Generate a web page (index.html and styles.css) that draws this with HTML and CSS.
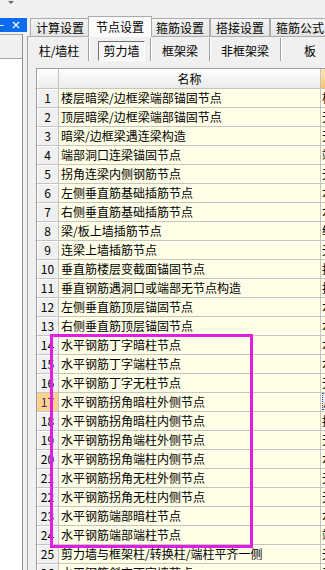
FILE: index.html
```html
<!DOCTYPE html>
<html lang="zh-CN">
<head>
  <meta charset="UTF-8">
  <title>节点设置</title>
  <link rel="stylesheet" href="styles.css">
</head>
<body>
  <div class="topbar"><span class="drop"></span></div>

  <div class="main">
    <aside class="side">
      <div class="side-title">
        <svg class="pin" width="4" height="7" viewBox="0 0 4 7"><path d="M0 3.5H3.5" stroke="#fff" stroke-width="1"/></svg>
        <svg class="close" width="8" height="8" viewBox="0 0 8 8"><path d="M1 1L7 7M7 1L1 7" stroke="#fff" stroke-width="1.2"/></svg>
      </div>
      <div class="side-body">
        <div class="side-head"></div>
        <div class="side-list"></div>
      </div>
    </aside>

    <section class="dialog">
      <div class="tabs">
        <div class="tab">计算设置</div>
        <div class="tab active">节点设置</div>
        <div class="tab">箍筋设置</div>
        <div class="tab">搭接设置</div>
        <div class="tab">箍筋公式</div>
      </div>

      <div class="page">
        <div class="subtabs">
          <div class="sub s1">柱/墙柱</div>
          <div class="sub s2"><span class="pressed">剪力墙</span></div>
          <div class="sub s3">框架梁</div>
          <div class="sub s4">非框架梁</div>
          <div class="sub s5">板</div>
        </div>

        <div class="grid">
          <div class="row head"><div class="num"></div><div class="name">名称</div><div class="val"></div></div>
          <div class="row"><div class="num">1</div><div class="name">楼层暗梁/边框梁端部锚固节点</div><div class="val">构造</div></div>
          <div class="row"><div class="num">2</div><div class="name">顶层暗梁/边框梁端部锚固节点</div><div class="val">无</div></div>
          <div class="row"><div class="num">3</div><div class="name">暗梁/边框梁遇连梁构造</div><div class="val">无</div></div>
          <div class="row"><div class="num">4</div><div class="name">端部洞口连梁锚固节点</div><div class="val">端</div></div>
          <div class="row"><div class="num">5</div><div class="name">拐角连梁内侧钢筋节点</div><div class="val">无</div></div>
          <div class="row"><div class="num">6</div><div class="name">左侧垂直筋基础插筋节点</div><div class="val">本</div></div>
          <div class="row"><div class="num">7</div><div class="name">右侧垂直筋基础插筋节点</div><div class="val">本</div></div>
          <div class="row"><div class="num">8</div><div class="name">梁/板上墙插筋节点</div><div class="val">纵</div></div>
          <div class="row"><div class="num">9</div><div class="name">连梁上墙插筋节点</div><div class="val">无</div></div>
          <div class="row"><div class="num">10</div><div class="name">垂直筋楼层变截面锚固节点</div><div class="val">按</div></div>
          <div class="row"><div class="num">11</div><div class="name">垂直钢筋遇洞口或端部无节点构造</div><div class="val">按</div></div>
          <div class="row"><div class="num">12</div><div class="name">左侧垂直筋顶层锚固节点</div><div class="val">本</div></div>
          <div class="row"><div class="num">13</div><div class="name">右侧垂直筋顶层锚固节点</div><div class="val">本</div></div>
          <div class="row"><div class="num">14</div><div class="name">水平钢筋丁字暗柱节点</div><div class="val">本</div></div>
          <div class="row"><div class="num">15</div><div class="name">水平钢筋丁字端柱节点</div><div class="val">本</div></div>
          <div class="row"><div class="num">16</div><div class="name">水平钢筋丁字无柱节点</div><div class="val">无</div></div>
          <div class="row current"><div class="num">17</div><div class="name">水平钢筋拐角暗柱外侧节点</div><div class="val"><span class="focus">从</span></div></div>
          <div class="row"><div class="num">18</div><div class="name">水平钢筋拐角暗柱内侧节点</div><div class="val">按</div></div>
          <div class="row"><div class="num">19</div><div class="name">水平钢筋拐角端柱外侧节点</div><div class="val">无</div></div>
          <div class="row"><div class="num">20</div><div class="name">水平钢筋拐角端柱内侧节点</div><div class="val">本</div></div>
          <div class="row"><div class="num">21</div><div class="name">水平钢筋拐角无柱外侧节点</div><div class="val">无</div></div>
          <div class="row"><div class="num">22</div><div class="name">水平钢筋拐角无柱内侧节点</div><div class="val">无</div></div>
          <div class="row"><div class="num">23</div><div class="name">水平钢筋端部暗柱节点</div><div class="val">本</div></div>
          <div class="row"><div class="num">24</div><div class="name">水平钢筋端部端柱节点</div><div class="val">端</div></div>
          <div class="row"><div class="num">25</div><div class="name">剪力墙与框架柱/转换柱/端柱平齐一侧</div><div class="val">无</div></div>
          <div class="row"><div class="num">26</div><div class="name">水平钢筋斜交丁字墙节点</div><div class="val">无</div></div>
        </div>
      </div>
    </section>
  </div>

  <!-- annotation box drawn over rows 14-24 -->
  <div class="mark"></div>
</body>
</html>
```

FILE: styles.css
```css
body {
  margin: 0;
  width: 325px;
  height: 570px;
  overflow: hidden;
  position: relative;
  background: #f0f0f0;
  color: #000;
  font-family: "Noto Sans CJK SC", "Liberation Sans", sans-serif;
  font-size: 12px;
}

.topbar {
  height: 16px;
}
.drop {
  display: block;
  width: 0;
  height: 0;
  margin: 1px 0 0 8px;
  border-left: 3px solid transparent;
  border-right: 3px solid transparent;
  border-top: 3px solid #6b6b6b;
}

.main {
  display: flex;
  height: 554px;
}

/* docked panel on the left */
.side {
  width: 27px;
  flex: none;
  display: flex;
  flex-direction: column;
}
.side-title {
  height: 14px;
  margin-top: 1px;
  background: #0b6cf2;
  display: flex;
  align-items: center;
}
.side-title .close {
  margin-left: 8px;
}
.side-body {
  flex: 1;
  width: 22px;
  margin-top: 2px;
  border-right: 1px solid #8e8e8e;
  display: flex;
  flex-direction: column;
}
.side-head {
  height: 23px;
  border-top: 1px solid #a9a9a9;
  border-bottom: 1px solid #a9a9a9;
}
.side-list {
  flex: 1;
  background: #fff;
}

/* dialog with tabs */
.dialog {
  flex: 1;
  min-width: 0;
  display: flex;
  flex-direction: column;
}
.tabs {
  display: flex;
  height: 18px;
  margin-top: 1px;
  padding-left: 3px;
}
.tab {
  width: 60px;
  flex: none;
  box-sizing: border-box;
  border: 1px solid #acacac;
  border-bottom: 0;
  background: linear-gradient(#f4f4f4, #e4e4e4);
  text-align: center;
  line-height: 17px;
  white-space: nowrap;
}
.tab.active {
  width: 64px;
  height: 21px;
  margin: -2px -2px 0;
  align-self: flex-start;
  background: #fbfbfb;
  line-height: 19px;
  position: relative;
  z-index: 1;
}

.page {
  flex: 1;
  border-top: 1px solid #acacac;
  border-left: 1px solid #a0a0a0;
}

.subtabs {
  display: flex;
  height: 23px;
  margin-top: 1px;
  padding-left: 2px;
}
.sub {
  flex: none;
  display: flex;
  align-items: flex-end;
  justify-content: center;
  border-right: 1px solid #a0a0a0;
  box-shadow: 1px 0 #fff;
  line-height: 20px;
  white-space: nowrap;
}
.s1 { width: 58px; }
.s2 { width: 62px; justify-content: flex-start; padding-left: 9px; box-sizing: border-box; }
.s3 { width: 58px; }
.s4 { width: 70px; }
.s5 { width: 58px; border-right: 0; box-shadow: none; }
.pressed {
  width: 47px;
  height: 20px;
  box-sizing: border-box;
  border: 1px solid;
  border-color: #6f6f6f #fdfdfd #fdfdfd #6f6f6f;
  background: #f7f7f7;
  text-align: center;
  line-height: 18px;
}

/* node table */
.grid {
  width: max-content;
  margin: 7px 0 0 8px;
  border-left: 1px solid #9c9c9c;
  border-top: 1px solid #9c9c9c;
}
.row {
  display: grid;
  grid-template-columns: 22px 262px 60px;
  height: 19px;
}
.row > div {
  box-sizing: border-box;
  border-right: 1px solid #c4c4c4;
  border-bottom: 1px solid #c4c4c4;
  white-space: nowrap;
  overflow: hidden;
  line-height: 18px;
}
.num {
  background: #f0f0f0;
  box-shadow: inset 1px 1px #fff;
  text-align: center;
}
.name {
  background: #fffee6;
  padding-left: 2px;
}
.val {
  background: #fffee6;
  padding-left: 1px;
}

.row.head {
  height: 20px;
}
.row.head > div {
  line-height: 19px;
  background: linear-gradient(#fefefe, #ebebeb);
}
.row.head .name {
  text-align: center;
  padding-left: 0;
}
.row.head .val {
  background: linear-gradient(#ffe9bb, #fcc46a);
}

.row.current .num {
  background: #ffd38e;
  box-shadow: none;
  color: #3c2a70;
}
.focus {
  display: block;
  height: 17px;
  margin-left: 0;
  border: 1px dotted #555;
  box-sizing: border-box;
  background: #dfe9f7;
  line-height: 15px;
}

.mark {
  position: absolute;
  left: 50px;
  top: 334px;
  width: 203px;
  height: 214px;
  box-sizing: border-box;
  border: 3px solid #e21ee2;
  pointer-events: none;
}
```
